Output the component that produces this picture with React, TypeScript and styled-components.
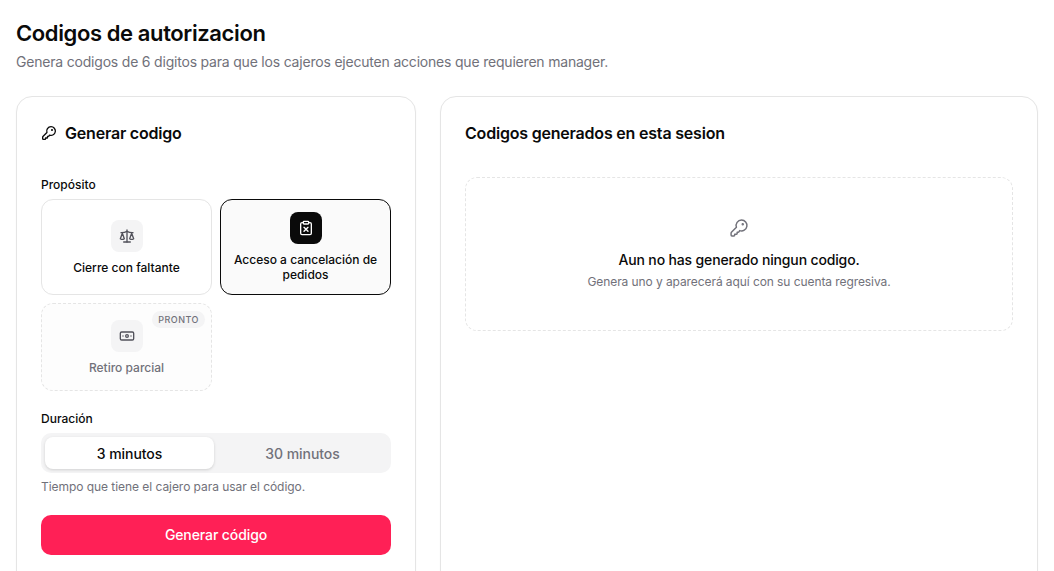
import React from "react";
import styled, {createGlobalStyle} from "styled-components";
import {Banknote, ClipboardX, Scale} from "lucide-react";

const GlobalStyle = createGlobalStyle`
  html, body {
    margin: 0;
    padding: 0;
    background: #ffffff;
    overflow: hidden;
    font-family: "Inter", "Liberation Sans", sans-serif;
    color: #0a0a0a;
  }
  * {
    box-sizing: border-box;
  }
`

const Page = styled.div`
  height: 571px;
  overflow: hidden;
  padding: 16px 16px 0;
`

const Title = styled.h1`
  margin: 1px 0 0;
  font-size: 22px;
  line-height: 32px;
  font-weight: 600;
  letter-spacing: -0.39px;
`

const Subtitle = styled.p`
  margin: 3px 0 0;
  font-size: 14px;
  line-height: 20px;
  letter-spacing: -0.2px;
  color: #71717a;
`

const Columns = styled.div`
  display: grid;
  grid-template-columns: 400px 598px;
  gap: 24px;
  margin-top: 24px;
  align-items: start;
`

const Card = styled.section`
  border: 1px solid #e5e5e5;
  border-radius: 16px;
  padding: 24px;
  height: 520px;
  background: #ffffff;
  box-shadow: 0 1px 2px rgba(0, 0, 0, 0.04);
`

const CardTitle = styled.h2`
  display: flex;
  align-items: center;
  gap: 8px;
  margin: 0;
  height: 24px;
  font-size: 16px;
  line-height: 24px;
  font-weight: 600;
  letter-spacing: -0.2px;
`

const FieldLabel = styled.div`
  font-size: 12px;
  line-height: 16px;
  font-weight: 450;
  margin-bottom: 6px;
`

const PurposeField = styled.div`
  margin-top: 32px;
`

const OptionGrid = styled.div`
  display: grid;
  grid-template-columns: 171px 171px;
  gap: 8px;
`

const Option = styled.button<{$selected?: boolean; $disabled?: boolean}>`
  position: relative;
  display: flex;
  flex-direction: column;
  align-items: center;
  justify-content: center;
  gap: 8px;
  padding: 12px;
  height: ${({$disabled}) => ($disabled ? "88px" : "96px")};
  border-radius: 12px;
  border: 1px ${({$disabled}) => ($disabled ? "dashed" : "solid")}
    ${({$selected}) => ($selected ? "#0a0a0a" : "#e5e5e5")};
  background: ${({$selected, $disabled}) =>
    $selected ? "#fafafa" : $disabled ? "#fdfdfd" : "#ffffff"};
  font-family: inherit;
  font-size: 12px;
  line-height: 15px;
  font-weight: 450;
  color: ${({$disabled}) => ($disabled ? "#71717a" : "#0a0a0a")};
  text-align: center;
`

const OptionIcon = styled.span<{$selected?: boolean}>`
  display: flex;
  align-items: center;
  justify-content: center;
  width: 32px;
  height: 32px;
  border-radius: 8px;
  flex-shrink: 0;
  background: ${({$selected}) => ($selected ? "#0a0a0a" : "#f4f4f5")};
  color: ${({$selected}) => ($selected ? "#ffffff" : "#52525b")};
`

const SoonBadge = styled.span`
  position: absolute;
  top: 7px;
  right: 6px;
  padding: 0 6px;
  height: 17px;
  border-radius: 9px;
  background: #f4f4f5;
  color: #71717a;
  font-size: 9px;
  line-height: 17px;
  font-weight: 500;
  letter-spacing: 0.5px;
`

const DurationField = styled.div`
  margin-top: 20px;
`

const Segmented = styled.div`
  display: grid;
  grid-template-columns: 1fr 1fr;
  gap: 4px;
  height: 40px;
  padding: 4px;
  border-radius: 10px;
  background: #f4f4f5;
`

const Segment = styled.button<{$active?: boolean}>`
  border: 0;
  border-radius: 8px;
  font-family: inherit;
  font-size: 14px;
  font-weight: 450;
  letter-spacing: -0.05px;
  background: ${({$active}) => ($active ? "#ffffff" : "transparent")};
  color: ${({$active}) => ($active ? "#0a0a0a" : "#71717a")};
  box-shadow: ${({$active}) => ($active ? "0 1px 3px rgba(0, 0, 0, 0.15)" : "none")};
`

const Hint = styled.p`
  margin: 6px 0 0;
  font-size: 12px;
  line-height: 16px;
  letter-spacing: -0.05px;
  color: #71717a;
`

const SubmitButton = styled.button`
  display: block;
  width: 100%;
  height: 40px;
  margin-top: 20px;
  padding: 0 0 1px;
  border: 0;
  border-radius: 10px;
  background: #ff2056;
  color: #ffffff;
  font-family: inherit;
  font-size: 14px;
  font-weight: 450;
  letter-spacing: -0.1px;
`

const EmptyState = styled.div`
  display: flex;
  flex-direction: column;
  align-items: center;
  justify-content: center;
  height: 154px;
  margin-top: 32px;
  border: 1px dashed #e5e5e5;
  border-radius: 12px;
  text-align: center;
  color: #71717a;
`

const EmptyTitle = styled.p`
  margin: 12px 0 0;
  font-size: 14px;
  line-height: 20px;
  font-weight: 450;
  letter-spacing: -0.15px;
  color: #0a0a0a;
`

const EmptyHint = styled.p`
  margin: 4px 0 0;
  font-size: 12px;
  line-height: 16px;
  letter-spacing: -0.08px;
  color: #71717a;
`

const KeyIcon = ({size, strokeWidth}: {size: number; strokeWidth: number}) => (
    <svg width={size} height={size} viewBox="0 0 24 24" fill="none" stroke="currentColor" strokeWidth={strokeWidth} strokeLinecap="round" strokeLinejoin="round">
        <path d="M15 2.5A6.5 6.5 0 0 0 8.9 11.2L2.9 17.2a1.4 1.4 0 0 0-.4 1V20.5a1 1 0 0 0 1 1H6a.8.8 0 0 0 .8-.8V19.5H9a.8.8 0 0 0 .8-.8V17h1.2a1.4 1.4 0 0 0 1-.4l.8-1.5A6.5 6.5 0 1 0 15 2.5Z" />
        <circle cx="16.5" cy="7.5" r="0.6" fill="currentColor" />
    </svg>
)

const App = () => {
    return (
        <Page>
            <GlobalStyle />
            <Title>Codigos de autorizacion</Title>
            <Subtitle>Genera codigos de 6 digitos para que los cajeros ejecuten acciones que requieren manager.</Subtitle>
            <Columns>
                <Card>
                    <CardTitle>
                        <KeyIcon size={16} strokeWidth={2} />
                        Generar codigo
                    </CardTitle>
                    <PurposeField>
                        <FieldLabel>Propósito</FieldLabel>
                        <OptionGrid>
                            <Option>
                                <OptionIcon><Scale size={16} strokeWidth={2} /></OptionIcon>
                                Cierre con faltante
                            </Option>
                            <Option $selected>
                                <OptionIcon $selected><ClipboardX size={16} strokeWidth={2} /></OptionIcon>
                                Acceso a cancelación de pedidos
                            </Option>
                            <Option $disabled>
                                <SoonBadge>PRONTO</SoonBadge>
                                <OptionIcon><Banknote size={16} strokeWidth={2} /></OptionIcon>
                                Retiro parcial
                            </Option>
                        </OptionGrid>
                    </PurposeField>
                    <DurationField>
                        <FieldLabel>Duración</FieldLabel>
                        <Segmented>
                            <Segment $active>3 minutos</Segment>
                            <Segment>30 minutos</Segment>
                        </Segmented>
                        <Hint>Tiempo que tiene el cajero para usar el código.</Hint>
                    </DurationField>
                    <SubmitButton>Generar código</SubmitButton>
                </Card>
                <Card>
                    <CardTitle>Codigos generados en esta sesion</CardTitle>
                    <EmptyState>
                        <KeyIcon size={20} strokeWidth={1.75} />
                        <EmptyTitle>Aun no has generado ningun codigo.</EmptyTitle>
                        <EmptyHint>Genera uno y aparecerá aquí con su cuenta regresiva.</EmptyHint>
                    </EmptyState>
                </Card>
            </Columns>
        </Page>
    )
}

export default App;
